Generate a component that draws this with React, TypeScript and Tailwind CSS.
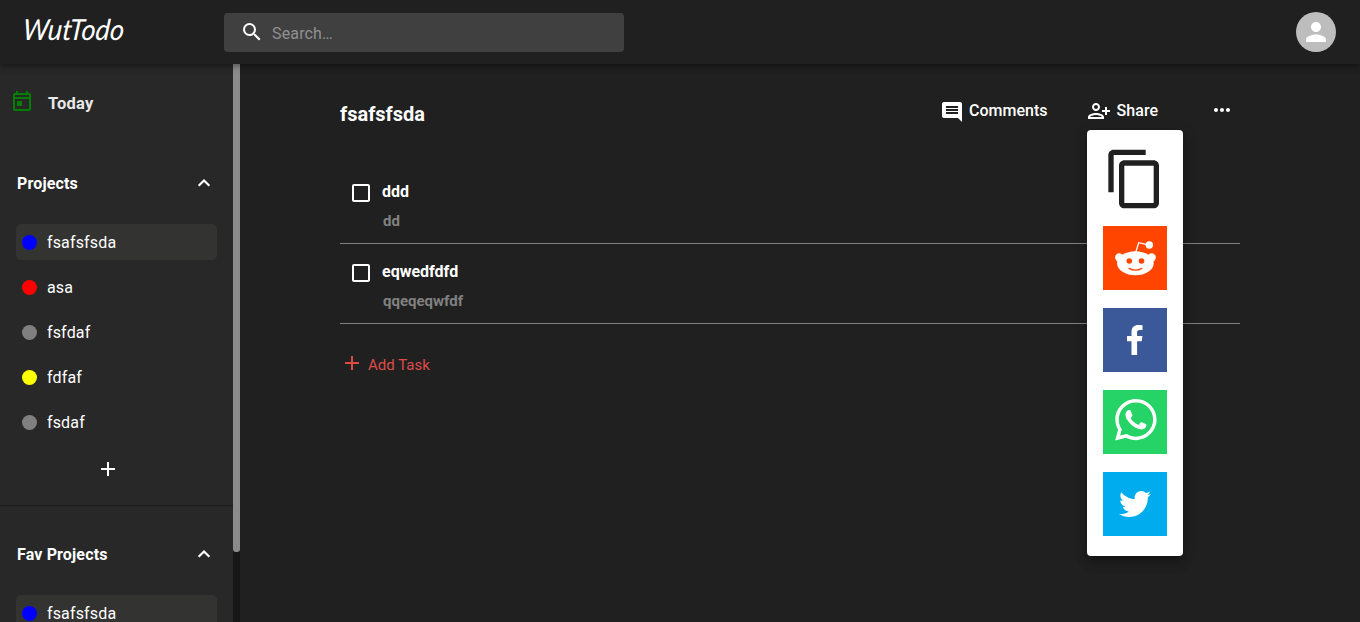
import React from "react";
import {
  MdAdd,
  MdCheckBoxOutlineBlank,
  MdComment,
  MdContentCopy,
  MdMoreHoriz,
  MdPerson,
  MdSearch,
} from "react-icons/md";

type Project = { name: string; dot: string; active?: boolean };

const projects: Project[] = [
  { name: "fsafsfsda", dot: "bg-[#0000ff]", active: true },
  { name: "asa", dot: "bg-[#ff0000]" },
  { name: "fsfdaf", dot: "bg-[#808080]" },
  { name: "fdfaf", dot: "bg-[#ffff00]" },
  { name: "fsdaf", dot: "bg-[#808080]" },
];

const tasks = [
  { title: "ddd", note: "dd" },
  { title: "eqwedfdfd", note: "qqeqeqwfdf" },
];

function TodayIcon() {
  return (
    <svg viewBox="0 0 24 24" className="size-6 fill-[#008000]">
      <path d="M19 4h-1V2h-2v2H8V2H6v2H5c-1.11 0-1.99.9-1.99 2L3 20c0 1.1.89 2 2 2h14c1.1 0 2-.9 2-2V6c0-1.1-.9-2-2-2zm0 16H5V10h14v10zm0-12H5V6h14v2zM7 12h5v5H7z" />
    </svg>
  );
}

function ChevronUp() {
  return (
    <svg viewBox="0 0 24 24" className="size-5 fill-none stroke-white stroke-[2.6]">
      <path d="M5.6 15.4 12 9l6.4 6.4" />
    </svg>
  );
}

function PersonAddIcon() {
  return (
    <svg viewBox="0 0 24 24" className="size-6 fill-white">
      <path d="M9 12c2.21 0 4-1.79 4-4s-1.79-4-4-4-4 1.79-4 4 1.79 4 4 4zm0-6c1.1 0 2 .9 2 2s-.9 2-2 2-2-.9-2-2 .9-2 2-2zm0 8c-2.67 0-8 1.34-8 4v2h16v-2c0-2.66-5.33-4-8-4zm6 4H3v-.01C3.2 17.29 6.3 16 9 16s5.8 1.29 6 2zm5-7V8h-2v3h-3v2h3v3h2v-3h3v-2z" />
    </svg>
  );
}

function ProjectRow({ name, dot, active }: Project) {
  return (
    <div
      className={
        active
          ? "flex h-9 items-center rounded-[5px] bg-[#333331] pl-[6px]"
          : "flex h-9 items-center rounded-[5px] pl-[6px]"
      }
    >
      <span className={`${dot} mr-[10px] size-[15px] rounded-full`} />
      <span className="pt-[2px] text-[16px] leading-6 tracking-[0.15px]">{name}</span>
    </div>
  );
}

function SectionHead({ title }: { title: string }) {
  return (
    <div className="flex h-6 items-center justify-between pr-[19px] pl-[17px]">
      <span className="pt-[2px] text-[16px] leading-6 font-bold tracking-[0.15px]">{title}</span>
      <ChevronUp />
    </div>
  );
}

function RedditIcon() {
  return (
    <svg viewBox="0 0 64 64" className="block size-16 bg-[#ff4500]">
      <g fill="#fff">
        <circle cx="16.3" cy="31.5" r="4.2" />
        <circle cx="48.6" cy="31.5" r="4.2" />
        <ellipse cx="32.4" cy="37.3" rx="18.3" ry="12" />
        <circle cx="46.3" cy="19" r="3.7" />
      </g>
      <path d="M32.8 26l2.9-9.3 8.4 2" fill="none" stroke="#fff" strokeWidth="1.3" />
      <circle cx="26.3" cy="35" r="2.8" fill="#ff4500" />
      <circle cx="38.5" cy="35" r="2.8" fill="#ff4500" />
      <path d="M26 42.4q6.4 3.5 12.8 0" fill="none" stroke="#ff4500" strokeWidth="1.3" strokeLinecap="round" />
    </svg>
  );
}

function FacebookIcon() {
  return (
    <svg viewBox="0 0 64 64" className="block size-16 bg-[#3b5998] fill-white">
      <path d="M34.1,47V33.3h4.6l0.7-5.3h-5.3v-3.4c0-1.5,0.4-2.6,2.6-2.6l2.8,0v-4.8c-0.5-0.1-2.2-0.2-4.1-0.2c-4.1,0-6.9,2.5-6.9,7V28H24v5.3h4.5V47H34.1z" />
    </svg>
  );
}

function WhatsappIcon() {
  return (
    <svg viewBox="0 0 64 64" className="block size-16 bg-[#25d366] fill-white">
      <path
        fillRule="evenodd"
        d="m42.32286,33.93287c-0.5178,-0.2589 -3.04726,-1.49644 -3.52105,-1.66732c-0.4712,-0.17346 -0.81554,-0.2589 -1.15987,0.2589c-0.34175,0.51004 -1.33075,1.66474 -1.63108,2.00648c-0.30032,0.33658 -0.60064,0.36247 -1.11327,0.12945c-0.5178,-0.2589 -2.17994,-0.80259 -4.14759,-2.56312c-1.53269,-1.37217 -2.56312,-3.05503 -2.86603,-3.57283c-0.30033,-0.5178 -0.03366,-0.80259 0.22524,-1.06149c0.23301,-0.23301 0.5178,-0.59547 0.7767,-0.90616c0.25372,-0.31068 0.33657,-0.5178 0.51262,-0.85437c0.17088,-0.36246 0.08544,-0.64725 -0.04402,-0.90615c-0.12945,-0.2589 -1.15987,-2.79613 -1.58964,-3.80584c-0.41424,-1.00971 -0.84142,-0.88027 -1.15987,-0.88027c-0.29773,-0.02588 -0.64208,-0.02588 -0.98382,-0.02588c-0.34693,0 -0.90616,0.12945 -1.37736,0.62136c-0.4712,0.5178 -1.80194,1.76053 -1.80194,4.27186c0,2.51133 1.84596,4.945 2.10227,5.30747c0.2589,0.33657 3.63497,5.51458 8.80262,7.74113c1.23237,0.5178 2.1903,0.82848 2.94111,1.08738c1.23237,0.38836 2.35599,0.33657 3.24402,0.20712c0.99159,-0.15534 3.04985,-1.24272 3.47963,-2.45956c0.44013,-1.21683 0.44013,-2.22654 0.31068,-2.45955c-0.12945,-0.23301 -0.46601,-0.36247 -0.98382,-0.59548m-9.40068,12.84407l-0.02589,0c-3.05503,0 -6.08417,-0.82849 -8.72495,-2.38189l-0.62136,-0.37023l-6.47252,1.68286l1.73463,-6.29129l-0.41424,-0.64725c-1.70875,-2.71846 -2.6149,-5.85116 -2.6149,-9.07706c0,-9.39809 7.68934,-17.06155 17.15993,-17.06155c4.58253,0 8.88029,1.78642 12.11655,5.02268c3.23625,3.21036 5.02267,7.50812 5.02267,12.06476c-0.0078,9.3981 -7.69712,17.06155 -17.14699,17.06155m14.60595,-31.64172c-3.93279,-3.80584 -9.1133,-5.95472 -14.62125,-5.95472c-11.3603,0 -20.60848,9.2065 -20.61625,20.52564c0,3.61684 0.94757,7.14565 2.75211,10.26282l-2.92557,10.63564l10.93337,-2.85309c3.0136,1.63108 6.4052,2.4958 9.85634,2.49839l0.01037,0c11.36031,0 20.61883,-9.20392 20.61883,-20.53083c0,-5.49541 -2.14111,-10.66152 -6.03653,-14.54483"
      />
    </svg>
  );
}

function TwitterIcon() {
  return (
    <svg viewBox="0 0 64 64" className="block size-16 bg-[#00aced] fill-white">
      <path d="M48,22.1c-1.2,0.5-2.4,0.9-3.8,1c1.4-0.8,2.4-2.1,2.9-3.6c-1.3,0.8-2.7,1.3-4.2,1.6C41.7,19.8,40,19,38.2,19c-3.6,0-6.6,2.9-6.6,6.6c0,0.5,0.1,1,0.2,1.5c-5.5-0.3-10.3-2.9-13.5-6.9c-0.6,1-0.9,2.1-0.9,3.3c0,2.3,1.2,4.3,2.9,5.5c-1.1,0-2.1-0.3-3-0.8c0,0,0,0.1,0,0.1c0,3.2,2.3,5.8,5.3,6.4c-0.6,0.1-1.1,0.2-1.7,0.2c-0.4,0-0.8,0-1.2-0.1c0.8,2.6,3.3,4.5,6.1,4.6c-2.2,1.8-5.1,2.8-8.2,2.8c-0.5,0-1.1,0-1.6-0.1c2.9,1.9,6.4,2.9,10.1,2.9c12.1,0,18.7-10,18.7-18.7c0-0.3,0-0.6,0-0.8C46,24.5,47.1,23.4,48,22.1z" />
    </svg>
  );
}

function ShareMenu() {
  return (
    <div className="absolute top-[130px] left-[1087px] z-20 flex h-[426px] w-24 flex-col items-center gap-[18px] rounded bg-white pt-[17px] shadow-[0_5px_5px_-3px_rgba(0,0,0,0.2),0_8px_10px_1px_rgba(0,0,0,0.14),0_3px_14px_2px_rgba(0,0,0,0.12)]">
      <MdContentCopy className="-mb-[3px] size-16 shrink-0 text-[#202020]" />
      <RedditIcon />
      <FacebookIcon />
      <WhatsappIcon />
      <TwitterIcon />
    </div>
  );
}

function Header() {
  return (
    <header className="relative z-10 flex h-16 shrink-0 items-center bg-[#202020] pr-6 shadow-[0_2px_4px_-1px_rgba(0,0,0,0.2),0_4px_5px_0_rgba(0,0,0,0.14),0_1px_10px_0_rgba(0,0,0,0.12)]">
      <div className="w-[224px] pb-[6px] pl-[23px]">
        <span className="inline-block origin-left scale-x-[0.94] -skew-x-6 font-[Lato,sans-serif] text-[29px] leading-9 italic">
          WutTodo
        </span>
      </div>
      <div className="flex h-[39px] w-[400px] items-center rounded bg-[#404040] pl-4">
        <MdSearch className="mb-px size-6 text-white" />
        <span className="ml-2 pt-[3px] text-[16px] leading-5 tracking-[0.15px] text-[#909090]">Search…</span>
      </div>
      <div className="ml-auto flex size-10 items-center justify-center rounded-full bg-[#bdbdbd]">
        <MdPerson className="size-[30px] text-white" />
      </div>
    </header>
  );
}

function Sidebar() {
  return (
    <aside className="flex w-60 shrink-0 overflow-hidden bg-[#282828]">
      <div className="w-[233px] shrink-0">
        <div className="flex h-[107px] items-start pt-[25px] pl-[10px]">
          <TodayIcon />
          <span className="mt-[3px] ml-[14px] text-[16.5px] leading-6 font-bold tracking-[0.2px] text-[#e8e8e8]">
            Today
          </span>
        </div>
        <SectionHead title="Projects" />
        <div className="mt-[29px] mr-4 ml-4 flex flex-col gap-[9px]">
          {projects.map((p) => (
            <ProjectRow key={p.name} {...p} />
          ))}
        </div>
        <div className="flex h-[66px] justify-center border-b border-[#1b1b1b] pt-[17px] pr-[17px]">
          <MdAdd className="size-6 text-white" />
        </div>
        <div className="h-9" />
        <SectionHead title="Fav Projects" />
        <div className="mt-[29px] mr-4 ml-4">
          <ProjectRow {...projects[0]} />
        </div>
      </div>
      <div className="w-[7px] bg-[#171717]">
        <div className="h-[488px] rounded-b-[3px] bg-[#8b8b8b]" />
      </div>
    </aside>
  );
}

function Main() {
  return (
    <main className="flex-1 pl-[100px]">
      <div className="w-[900px]">
        <div className="flex h-[100px] items-start">
          <h1 className="w-[600px] shrink-0 pt-[36px] text-[20px] leading-7 font-bold">fsafsfsda</h1>
          <div className="flex shrink-0 items-center pt-[34px] text-[16px] font-medium">
            <MdComment className="mt-[2px] size-6" />
            <span className="ml-[5px] w-[118px]">Comments</span>
            <PersonAddIcon />
            <span className="ml-[5.5px] w-[93.5px] tracking-[0.1px]">Share</span>
            <MdMoreHoriz className="mb-[2px] size-6" />
          </div>
        </div>
        {tasks.map((t) => (
          <div key={t.title} className="flex h-20 border-b border-[#808080] pt-[17px] pl-[9px]">
            <MdCheckBoxOutlineBlank className="size-6" />
            <div className="ml-[9px]">
              <div className="text-[16px] leading-[22px] font-bold">{t.title}</div>
              <div className="mt-2 ml-px text-[15px] leading-5 font-bold text-[#808080]">{t.note}</div>
            </div>
          </div>
        ))}
        <div className="flex items-center pt-[27px] text-[#de4c4a]">
          <MdAdd className="size-6" />
          <span className="ml-1 pt-[4px] text-[15px] leading-5">Add Task</span>
        </div>
      </div>
    </main>
  );
}

export default function App() {
  return (
    <div className="relative flex h-[622px] w-[1360px] flex-col overflow-hidden bg-[#202020] font-[Roboto,sans-serif] text-white">
      <Header />
      <div className="flex h-[558px]">
        <Sidebar />
        <Main />
      </div>
      <ShareMenu />
    </div>
  );
}
